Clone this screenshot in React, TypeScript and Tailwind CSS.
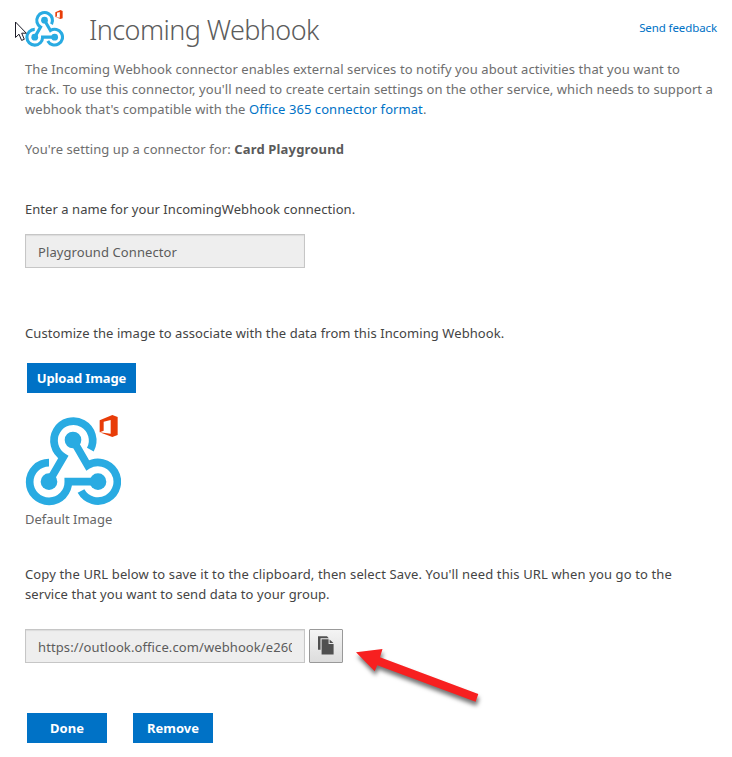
function WebhookLogo({ className }: { className: string }) {
  return (
    <svg viewBox="45 45 288 276" className={className} aria-hidden="true">
      <g fill="none" stroke="#29abe2" strokeWidth="23">
        <path d="M241 149 A58 58 0 1 0 160 171 L117 245" />
        <path d="M117 188 A58 58 0 1 0 175 245 H264" />
        <path d="M213 273 A58 58 0 1 0 233 196 L189 120" />
      </g>
      <g fill="#29abe2">
        <circle cx="189" cy="120" r="25" />
        <circle cx="117" cy="245" r="25" />
        <circle cx="264" cy="245" r="25" />
      </g>
      <path
        fill="#e83c08"
        d="M269 97 V61 L307 45 L323 51 V105 L307 111 L269 97 L302 101 V60 L281 65 V92 Z"
      />
    </svg>
  );
}

function Cursor() {
  return (
    <svg viewBox="0 0 14 22" className="absolute left-[15px] top-[21px] h-[22px] w-[14px]" aria-hidden="true">
      <path
        d="M0.5 1 V16.5 L4 13.2 L6.6 19.4 L9.3 18.3 L6.7 12.2 H11.3 Z"
        fill="#fff"
        stroke="#1c1c28"
        strokeWidth="1"
      />
    </svg>
  );
}

function CopyIcon() {
  return (
    <svg viewBox="0 0 16 20" className="h-5 w-4" aria-hidden="true">
      <path d="M0 0.3 H9 L10.8 2.3 H2.5 V13.8 H0 Z" fill="#505050" />
      <path d="M3.6 3.2 H10.6 V7.9 H15.6 V18.6 H3.6 Z" fill="#505050" />
      <path d="M11.6 3.4 L15.4 7.1 H11.6 Z" fill="#505050" />
    </svg>
  );
}

function Arrow() {
  return (
    <svg
      viewBox="0 0 140 70"
      className="absolute left-[350px] top-[642px] h-[70px] w-[140px] drop-shadow-[1px_4px_2px_rgba(0,0,0,0.55)]"
      aria-hidden="true"
    >
      <path d="M6 10.3 L32.5 7 L30 15.3 L128.3 52 L125.6 59.8 L27.3 23.3 L24.7 29.3 Z" fill="#f72020" />
    </svg>
  );
}

const button =
  "flex h-[30px] items-center justify-center bg-[#0072c6] text-[13px] font-bold text-white";
const field =
  "h-[34px] w-[280px] border border-[#c6c6c6] bg-[#eeeeee] px-3 pt-[7px] leading-5 text-[#5c5c5c] shadow-[inset_0_1px_1px_rgba(0,0,0,0.08)]";

export default function App() {
  return (
    <main className="relative h-[757px] w-[732px] overflow-hidden bg-white pl-[25px] font-['Noto_Sans',sans-serif] text-[13px] leading-5 text-[#444444]">
      <header className="flex h-[59px] items-start">
        <WebhookLogo className="mt-[10px] h-[37.5px] w-[39px]" />
        <h1 className="ml-[25px] mt-[12px] whitespace-nowrap text-[27px] font-light leading-9 tracking-[-0.58px] text-[#5c5c5c]">
          Incoming Webhook
        </h1>
        <a className="ml-auto mr-[15px] mt-[18px] whitespace-nowrap text-[11.5px] leading-5 tracking-[-0.1px] text-[#0072c6]">
          Send feedback
        </a>
      </header>

      <section className="whitespace-nowrap text-[#6e6e6e]">
        <p className="tracking-[0.083px]">
          The Incoming Webhook connector enables external services to notify you about activities that you want to
        </p>
        <p className="tracking-[0.074px]">
          track. To use this connector, you'll need to create certain settings on the other service, which needs to support a
        </p>
        <p className="tracking-[0.07px]">
          webhook that's compatible with the <a className="text-[#0072c6]">Office 365 connector format</a>.
        </p>
        <p className="mt-5 tracking-[0.08px]">
          You're setting up a connector for: <b className="font-bold tracking-[0.17px] text-[#5a5a5a]">Card Playground</b>
        </p>
      </section>

      <section className="mt-10">
        <p className="tracking-[0.05px]">Enter a name for your IncomingWebhook connection.</p>
        <div className={`${field} mt-[15px] tracking-[0.09px]`}>Playground Connector</div>
      </section>

      <section className="mt-[55px]">
        <p className="tracking-[0.08px]">
          Customize the image to associate with the data from this Incoming Webhook.
        </p>
        <button className={`${button} ml-[2px] mt-5 w-[109px] tracking-[-0.12px]`}>Upload Image</button>
        <WebhookLogo className="mt-[22px] h-[92px] w-[96px]" />
        <p className="mt-[2px] text-[#666666]">Default Image</p>
      </section>

      <section className="mt-[35px]">
        <p className="whitespace-nowrap tracking-[0.132px]">
          Copy the URL below to save it to the clipboard, then select Save. You'll need this URL when you go to the
        </p>
        <p className="tracking-[0.08px]">service that you want to send data to your group.</p>
        <div className="mt-[25px] flex gap-1">
          <div className={field}>
            <div className="overflow-hidden whitespace-nowrap tracking-[0.1px]">
              https://outlook.office.com/webhook/e260
            </div>
          </div>
          <button className="flex h-[34px] w-[34px] items-center justify-center rounded-[1px] border border-[#999999] bg-linear-to-b from-[#f4f4f4] to-[#dddddd]">
            <CopyIcon />
          </button>
        </div>
      </section>

      <footer className="ml-[2px] mt-[50px] flex gap-[26px]">
        <button className={`${button} w-20`}>Done</button>
        <button className={`${button} w-20`}>Remove</button>
      </footer>

      <Cursor />
      <Arrow />
    </main>
  );
}
